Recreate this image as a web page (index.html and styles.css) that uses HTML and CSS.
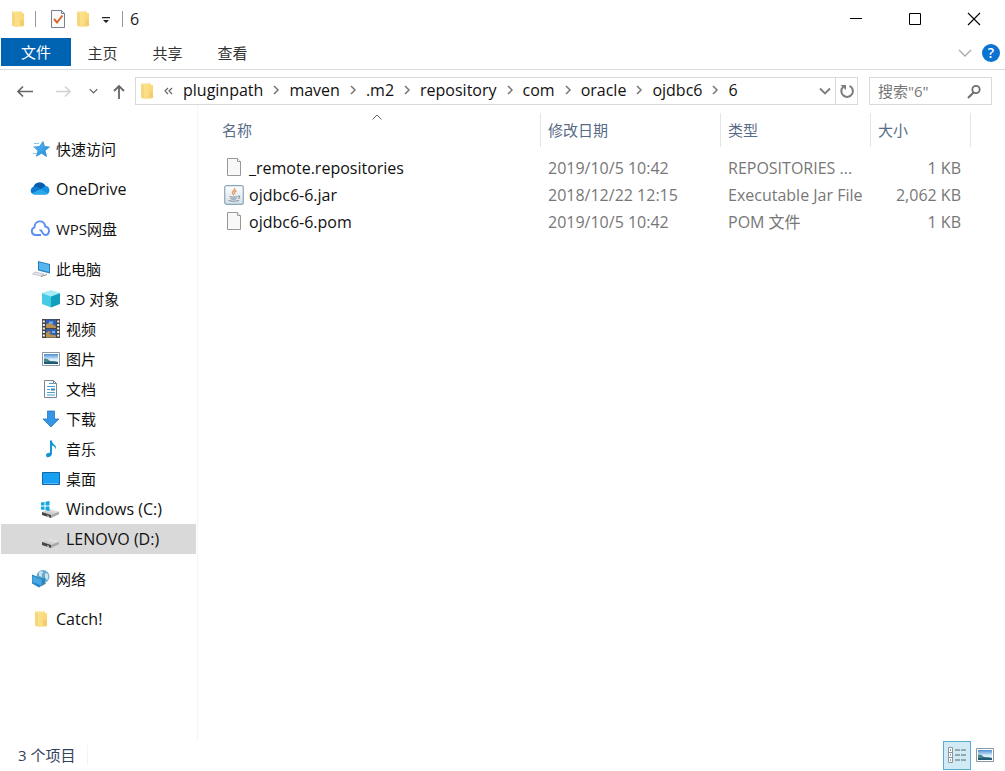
FILE: index.html
```html
<!DOCTYPE html>
<html lang="zh-CN">
<head>
<meta charset="utf-8">
<meta name="viewport" content="width=device-width, initial-scale=1">
<title>6</title>
<link rel="stylesheet" href="styles.css">
</head>
<body>
<svg class="defs" aria-hidden="true">
  <defs>
    <linearGradient id="fold" x1="0" x2="1"><stop offset="0" stop-color="#fde491"/><stop offset="1" stop-color="#f9d778"/></linearGradient>
    <linearGradient id="sky" x1="0" y1="0" x2="0" y2="1"><stop offset="0" stop-color="#4a8fd6"/><stop offset=".55" stop-color="#d9eefa"/><stop offset="1" stop-color="#e8f6f5"/></linearGradient>
    <linearGradient id="drive" x1="0" y1="1" x2="1" y2="0"><stop offset="0" stop-color="#b5b5b5"/><stop offset="1" stop-color="#f4f4f4"/></linearGradient>
    <linearGradient id="blue" x1="0" y1="0" x2="1" y2="1"><stop offset="0" stop-color="#5cb8f2"/><stop offset="1" stop-color="#1f8ddb"/></linearGradient>
    <linearGradient id="jar" x1="0" y1="0" x2="0" y2="1"><stop offset="0" stop-color="#ffffff"/><stop offset="1" stop-color="#d3dee6"/></linearGradient>
    <symbol id="i-folder" viewBox="0 0 14 18"><path fill="url(#fold)" d="M1 1.500h10v2l2-.5v13l-8 1-4-1.500z"/><path fill="#eec769" d="M1 1.500L4 4v12.800l-3-1.300z" opacity=".45"/><path fill="#eec35c" d="M9 10.500l2-1.500 2 1v6l-4 .5z" opacity=".5"/></symbol>
    <symbol id="i-right" viewBox="0 0 8 10"><path d="M2 1l4 4-4 4" fill="none" stroke="#777" stroke-width="1.5"/></symbol>
    <symbol id="i-down" viewBox="0 0 12 8"><path d="M1 1.5l5 5 5-5" fill="none" stroke="currentColor" stroke-width="1.8"/></symbol>
    <symbol id="i-pic" viewBox="0 0 18 14"><path fill="#fff" stroke="#8a97a5" d="M.5.5h17v13H.5z"/><path fill="url(#sky)" d="M2 2h14v10H2z"/><path fill="#47878c" d="M2 7c2-1 4 0 6 2l8 1v2H2z"/><path fill="#225b78" d="M2 10c4 0 7-1 14 0v2H2z"/></symbol>
    <symbol id="i-file" viewBox="0 0 20 20"><path d="M3.500 .5h10l3 3v14h-13z" fill="#f8f8f8" stroke="#999"/><path d="M13.500 .5v3h3" fill="#fff" stroke="#999"/></symbol>
    <symbol id="i-drive" viewBox="0 0 20 20"><path fill="url(#drive)" d="M2 13l8-3 9 2.500-8 3.500z"/><path fill="#454545" d="M2 13l9 3v3l-9-3z"/><path fill="#aaa" d="M11 16l8-3.500v2.700L11 19z"/><path fill="#d8eadf" d="M7 16.200l2 .7v1l-2-.7z"/></symbol>
  </defs>
</svg>

<header class="titlebar">
  <svg class="ic-folder"><use href="#i-folder"/></svg>
  <span class="bar"></span>
  <button class="bare" aria-label="属性"><svg width="16" height="20" viewBox="0 0 16 20"><path d="M1.500 1.500h10l3 3v14h-13z" fill="#fafafa" stroke="#77808c"/><path d="M11.500 1.500v3h3" fill="none" stroke="#77808c"/><path d="M4 10l3 3.500 5.500-7" fill="none" stroke="#d8662f" stroke-width="2"/></svg></button>
  <button class="bare new-folder" aria-label="新建文件夹"><svg class="ic-folder"><use href="#i-folder"/></svg></button>
  <button class="bare customize" aria-label="自定义快速访问工具栏"><svg width="8" height="10" viewBox="0 0 8 10"><path d="M0 3h8v1.300H0zM1 6h6L4 9z" fill="#222"/></svg></button>
  <span class="bar"></span>
  <h1 class="title">6</h1>
  <div class="window-buttons">
    <button class="bare" aria-label="最小化"><svg width="14" height="14" viewBox="0 0 14 14"><path d="M1 6.500h12" stroke="#000"/></svg></button>
    <button class="bare" aria-label="最大化"><svg width="14" height="14" viewBox="0 0 14 14"><path d="M1.500 1.500h11v11h-11z" fill="none" stroke="#000"/></svg></button>
    <button class="bare" aria-label="关闭"><svg width="14" height="14" viewBox="0 0 14 14"><path d="M1 1l12 12M13 1L1 13" stroke="#000" stroke-width="1.100"/></svg></button>
  </div>
</header>

<nav class="ribbon">
  <button class="tab active">文件</button>
  <button class="tab">主页</button>
  <button class="tab">共享</button>
  <button class="tab">查看</button>
  <div class="ribbon-end">
    <button class="bare expand" aria-label="展开功能区"><svg width="14" height="8" viewBox="0 0 14 8"><path d="M1 1l6 6 6-6" fill="none" stroke="#aaa" stroke-width="1.400"/></svg></button>
    <button class="help" aria-label="帮助">?</button>
  </div>
</nav>

<div class="toolbar">
  <div class="history">
    <button class="bare" aria-label="后退"><svg width="18" height="14" viewBox="0 0 18 14"><path d="M17 7.500H2M7 2.500l-5 5 5 5" fill="none" stroke="#666" stroke-width="1.700"/></svg></button>
    <button class="bare forward" aria-label="前进"><svg width="18" height="14" viewBox="0 0 18 14"><path d="M2 7.500h14M11 2.500l5 5-5 5" fill="none" stroke="#d2d2d2" stroke-width="1.500"/></svg></button>
    <button class="bare recent" aria-label="最近浏览的位置"><svg class="ic-small-down"><use href="#i-down"/></svg></button>
    <button class="bare up" aria-label="上移"><svg width="14" height="16" viewBox="0 0 14 16"><path d="M7 16V3M2 8l5-5 5 5" fill="none" stroke="#666" stroke-width="1.800"/></svg></button>
  </div>
  <div class="address">
    <svg class="ic-folder"><use href="#i-folder"/></svg>
    <button class="bare overflow" aria-label="更多"><svg width="9" height="8" viewBox="0 0 9 8"><path d="M4 1L1 4l3 3M8 1L5 4l3 3" fill="none" stroke="#666" stroke-width="1.200"/></svg></button>
    <div class="crumbs">
      <button class="crumb">pluginpath</button><svg class="sep"><use href="#i-right"/></svg>
      <button class="crumb">maven</button><svg class="sep"><use href="#i-right"/></svg>
      <button class="crumb">.m2</button><svg class="sep"><use href="#i-right"/></svg>
      <button class="crumb">repository</button><svg class="sep"><use href="#i-right"/></svg>
      <button class="crumb">com</button><svg class="sep"><use href="#i-right"/></svg>
      <button class="crumb">oracle</button><svg class="sep"><use href="#i-right"/></svg>
      <button class="crumb">ojdbc6</button><svg class="sep"><use href="#i-right"/></svg>
      <button class="crumb">6</button>
    </div>
    <button class="bare drop" aria-label="以前的位置"><svg class="ic-down"><use href="#i-down"/></svg></button>
    <button class="bare refresh" aria-label="刷新"><svg width="16" height="16" viewBox="0 0 16 16"><path d="M10.500 2.800A5.800 5.800 0 1 1 4 4" fill="none" stroke="#7c7c7c" stroke-width="2"/><path d="M1.500 2H7v5z" fill="#7c7c7c"/></svg></button>
  </div>
  <label class="search">
    <input type="text" placeholder="搜索&quot;6&quot;" aria-label="搜索">
    <svg width="16" height="16" viewBox="0 0 16 16"><circle cx="10" cy="6.500" r="3.700" fill="none" stroke="#707070" stroke-width="1.800"/><path d="M7.500 9.500L2 15" stroke="#707070" stroke-width="2.200"/></svg>
  </label>
</div>

<div class="body">
  <nav class="tree">
    <ul class="group"><li><button class="node"><svg viewBox="0 0 20 20"><path d="M13 2.500l1.500 5 5 .5-4.500 3.500 1.500 6-5-3.200-5 3 1.500-5.600-4-3.700 5.500-.5z" fill="url(#blue)" stroke="#2384c8" stroke-width=".7"/><path d="M4 4.500h5M3 14.500h4M3 8h3" stroke="#8bc6ea"/></svg>快速访问</button></li></ul>
    <ul class="group"><li><button class="node latin"><svg viewBox="0 0 20 20"><path d="M4 15.500a4 4 0 0 1-.5-7.500A6.500 6.500 0 0 1 15.500 7a4.300 4.300 0 0 1 .5 8.500z" fill="#1490df"/><path d="M3.500 8A6.500 6.500 0 0 1 15.500 7L10 10.500z" fill="#0a5cad"/><path d="M3.500 8c3-1.500 5 .5 7 1.800L2 14.500c-3-3 0-6.500 1.500-6.500z" fill="#0f78cf"/><path d="M10.500 10L18 14.500q-1 1-2 1H4q-1 0-2-1z" fill="#29a9ea"/></svg>OneDrive</button></li></ul>
    <ul class="group"><li><button class="node"><svg viewBox="0 0 20 20"><path d="M11 16H5a4 4 0 0 1-.5-7.700C4.500 1 14 .2 15.300 7.500 20.500 8.500 20 16 15 16c-3 0-2-5-5.500-5" fill="none" stroke="#5b8ff0" stroke-width="1.900"/></svg>WPS网盘</button></li></ul>
    <ul class="group">
      <li><button class="node"><svg viewBox="0 0 20 20"><path d="M8 2l12 3v9.500L8 11.500z" fill="#2a7fb8"/><path d="M9 3.300l10 2.500v7.200L9 10.600z" fill="#55b5f0"/><path d="M5 13l9 2-3 2-8.500-2z" fill="#e4e7ea" stroke="#aab" stroke-width=".6"/><path d="M11 17.500l6-2" stroke="#888"/></svg>此电脑</button></li>
      <li><button class="node child"><svg viewBox="0 0 20 20"><path d="M11 1l9 3-9 3.500L2 4z" fill="#a7edf6"/><path d="M2 4l9 3.500V18.500L2 15z" fill="#47cbe4"/><path d="M20 4l-9 3.500v11l9-3.500z" fill="#119fbe"/></svg>3D 对象</button></li>
      <li><button class="node child"><svg viewBox="0 0 20 20"><path d="M2 0h18v19H2z" fill="#454545"/><path d="M6 .5h10v8.500H6zM6 10h10v8.500H6z" fill="#315fb5"/><path d="M6 5.500l4-2 6 4V9H6zM6 14l3-2 2 1-2 2 7 1.500v2H6z" fill="#b8934f"/><path d="M9 2.500h4v2H9zM12 12h3v2h-3z" fill="#7ab0ec"/><path d="M3.800 1.500v17M18.200 1.500v17" stroke="#f5f5f5" stroke-width="2" stroke-dasharray="2 1.500"/></svg>视频</button></li>
      <li><button class="node child"><svg viewBox="-2 -3 20 20"><use href="#i-pic" width="18" height="14"/></svg>图片</button></li>
      <li><button class="node child"><svg viewBox="0 0 20 20"><path d="M4.500 1.500h9l3 3v14h-12z" fill="#fff" stroke="#7a8791"/><path d="M13.500 1.500v3h3" fill="none" stroke="#7a8791"/><path d="M9 4.500h4M7 7.500h8M7 10.500h3M7 13.500h8M7 16h8" stroke="#48a0d4" stroke-width="1.200"/><path d="M11 9.500h4v2h-4z" fill="#2c86bd"/></svg>文档</button></li>
      <li><button class="node child"><svg viewBox="0 0 20 20"><path d="M7.500 2h7v8H19l-8 8-8-8h4.500z" fill="#3595e6" stroke="#2878c0" stroke-width=".8"/></svg>下载</button></li>
      <li><button class="node child"><svg viewBox="0 0 20 20"><path d="M10 1.500h2c0 4 5 4 4 9-1-3-3-4-4-4v8c0 4-6 5-6 2 0-2 2-3 4-2.500z" fill="#1595d8"/></svg>音乐</button></li>
      <li><button class="node child"><svg viewBox="0 0 20 20"><path d="M2.500 3.500h17v12h-17z" fill="#19a0f3" stroke="#1466a8"/><path d="M4 14.500h14" stroke="#56bdf8"/></svg>桌面</button></li>
      <li><button class="node child latin"><svg viewBox="0 0 20 20"><use href="#i-drive"/><path d="M1 3.500l3.500-.5v3.500H1zM5.500 2.800L9.500 2v4.500h-4zM1 7.500h3.500V11L1 10.500zM5.500 7.500h4V12l-4-.8z" fill="#12a7dd"/></svg>Windows (C:)</button></li>
      <li><button class="node child latin selected" aria-current="true"><svg viewBox="0 0 20 20"><use href="#i-drive"/></svg>LENOVO (D:)</button></li>
    </ul>
    <ul class="group"><li><button class="node"><svg viewBox="0 0 20 20"><circle cx="13" cy="7.500" r="6.500" fill="#6aa9cb"/><path d="M9 3.500c2-2 4-1 4 0s-2 1-1 3-2 1-3 0zM15 4.500c3-1 4 2 3 5s-2 0-3-1z" fill="#c7e6ef"/><path d="M2 5.500l10 4 3-1v6L9 18.500l-7-4z" fill="#2686c6"/><path d="M2.500 7l9 3.500v6L2.500 13z" fill="#4aa6e0"/><path d="M12 16.500l4-2.500" stroke="#657b88"/></svg>网络</button></li></ul>
    <ul class="group"><li><button class="node latin"><svg viewBox="-4 -1 20 20"><use href="#i-folder" width="14" height="18"/></svg>Catch!</button></li></ul>
  </nav>
  <main class="files">
    <table class="list">
      <colgroup><col class="c-name"><col class="c-date"><col class="c-type"><col class="c-size"></colgroup>
      <thead><tr>
        <th class="name-head"><svg class="sort" viewBox="0 0 10 6"><path d="M.5 5.500L5 1l4.500 4.500" fill="none" stroke="#666"/></svg>名称</th><th>修改日期</th><th>类型</th><th>大小</th>
      </tr></thead>
      <tbody>
        <tr><td class="name"><svg><use href="#i-file"/></svg>_remote.repositories</td><td>2019/10/5 10:42</td><td>REPOSITORIES ...</td><td class="size">1 KB</td></tr>
        <tr><td class="name"><svg viewBox="0 0 20 20"><rect x=".7" y=".7" width="18.600" height="18.600" rx="2" fill="url(#jar)" stroke="#8ba7ba" stroke-width="1.200"/><path d="M10.500 3c1.500 2.500-3 3-2 5 .5 1 1.500 1.500 1 2.500M12.500 5.500c-2 1-2.500 2-1.500 3.200" fill="none" stroke="#e39a68" stroke-width="1.400"/><path d="M5.500 11.500q4 1.500 8 0M6.500 13.500q3 1.200 6 0M4.500 15.500q5 1.600 10.500 0M14 11c2.500-.3 2 2 0 2.500" fill="none" stroke="#8294a3" stroke-width="1.100"/></svg>ojdbc6-6.jar</td><td>2018/12/22 12:15</td><td>Executable Jar File</td><td class="size">2,062 KB</td></tr>
        <tr><td class="name"><svg><use href="#i-file"/></svg>ojdbc6-6.pom</td><td>2019/10/5 10:42</td><td>POM 文件</td><td class="size">1 KB</td></tr>
      </tbody>
    </table>
  </main>
</div>

<footer class="status">
  <span class="count">3 个项目</span>
  <div class="views">
    <button class="view on" aria-label="详细信息" aria-pressed="true"><svg width="20" height="16" viewBox="0 0 20 16"><path d="M1.500.500h4v15h-4zM1.500 5.500h4M1.500 10.500h4" fill="#fff" stroke="#8b969c"/><path d="M3 2.500h1v1H3zM3 7.500h1v1H3zM3 12.500h1v1H3z" fill="#333"/><path d="M8 3h5M14 3h5M8 8h5M14 8h5M8 13h5M14 13h5" stroke="#59656b"/></svg></button>
    <button class="view" aria-label="大图标"><svg width="18" height="14"><use href="#i-pic"/></svg></button>
  </div>
</footer>
</body>
</html>
```
FILE: styles.css
```css
* {
  box-sizing: border-box;
}

body {
  display: flex;
  flex-direction: column;
  min-height: 100vh;
  margin: 0;
  background: #fff;
  color: #1a1a1a;
  font: 15px/20px "Open Sans", "Noto Sans CJK SC", sans-serif;
}

button,
input {
  margin: 0;
  padding: 0;
  border: 0;
  background: none;
  color: inherit;
  font: inherit;
}

svg {
  display: block;
  flex: none;
}

.defs {
  position: absolute;
  width: 0;
  height: 0;
}

.bare {
  display: flex;
  align-items: center;
  justify-content: center;
}

.ic-folder {
  width: 14px;
  height: 18px;
}

.titlebar {
  display: flex;
  align-items: center;
  height: 38px;
  padding-left: 11px;
}

.bar {
  width: 1px;
  height: 16px;
  margin: 0 14px 0 10px;
  background: #999;
}

.new-folder {
  margin-left: 10px;
}

.customize {
  margin-left: 12px;
}

.customize + .bar {
  margin: 0 7px 0 12px;
}

.title {
  margin: 0;
  font-size: 16px;
  font-weight: 400;
}

.window-buttons {
  display: flex;
  margin-left: auto;
  padding-right: 2px;
}

.window-buttons .bare {
  width: 59px;
  height: 38px;
}

.ribbon {
  display: flex;
  height: 32px;
  padding-left: 1px;
  border-bottom: 1px solid #dadbdc;
}

.tab {
  width: 65px;
  height: 30px;
  padding-right: 2px;
  color: #333;
}

.tab.active {
  width: 70px;
  height: 28px;
  padding: 0;
  background: #0063b1;
  color: #fff;
}

.ribbon-end {
  display: flex;
  align-items: center;
  gap: 10px;
  height: 30px;
  margin-left: auto;
  padding-right: 5px;
}

.help {
  width: 18px;
  height: 18px;
  border-radius: 50%;
  background: #0b73d0;
  color: #fff;
  font-size: 14px;
  font-weight: 600;
  line-height: 18px;
}

.toolbar {
  display: flex;
  padding: 7px 13px 0 0;
}

.history {
  display: flex;
  align-items: center;
  width: 135px;
  padding-left: 16px;
}

.forward {
  margin-left: 20px;
}

.recent {
  margin-left: 17px;
}

.up {
  margin-left: 14px;
}

.ic-small-down {
  width: 9px;
  height: 6px;
  color: #666;
}

.address {
  display: flex;
  flex: 1;
  align-items: center;
  height: 28px;
  padding-left: 4px;
  border: 1px solid #d9d9d9;
}

.overflow {
  width: 29px;
  height: 26px;
}

.crumbs {
  display: flex;
  flex: 1;
  align-items: center;
  height: 24px;
  margin-bottom: 2px;
  color: #111;
  font-size: 16px;
}

.sep {
  width: 8px;
  height: 10px;
  margin: 0 9px;
}

.drop {
  width: 20px;
  height: 26px;
  color: #7c7c7c;
}

.ic-down {
  width: 12px;
  height: 8px;
}

.refresh {
  width: 22px;
  height: 26px;
  border-left: 1px solid #d9d9d9;
}

.search {
  display: flex;
  align-items: center;
  width: 123px;
  height: 28px;
  margin-left: 11px;
  padding: 0 9px 0 8px;
  border: 1px solid #d9d9d9;
}

.search input {
  flex: 1;
  min-width: 0;
  outline: 0;
}

.search input::placeholder {
  color: #777;
  opacity: 1;
}

.body {
  display: flex;
  flex: 1;
}

.tree {
  display: flex;
  flex-direction: column;
  gap: 10px;
  width: 198px;
  padding: 29px 1px 0 1px;
  border-right: 1px solid #f5f5f5;
}

.group {
  margin: 0;
  padding: 0;
  list-style: none;
}

.node {
  display: flex;
  align-items: center;
  gap: 6px;
  width: 195px;
  height: 30px;
  padding-left: 29px;
  color: #111;
  white-space: nowrap;
}

.node svg {
  width: 20px;
  height: 20px;
}

.node.child {
  padding-left: 39px;
}

.node.latin {
  font-size: 16px;
}

.node.selected {
  background: #d9d9d9;
}

.files {
  flex: 1;
  padding: 8px 0 0 16px;
}

.list {
  table-layout: fixed;
  width: 757px;
  border-collapse: separate;
  border-spacing: 0;
  color: #777;
}

.c-name {
  width: 327px;
}

.c-date {
  width: 180px;
}

.c-type {
  width: 150px;
}

.c-size {
  width: 100px;
}

.list th {
  position: relative;
  height: 34px;
  padding: 0 7px;
  border-right: 1px solid #e5e5e5;
  color: #586b87;
  font-weight: 400;
  text-align: left;
}

.list .name-head {
  padding-left: 8px;
}

.sort {
  position: absolute;
  top: 1px;
  left: calc(50% - 5px);
  width: 10px;
  height: 6px;
}

.list thead::after {
  display: block;
  height: 7px;
  content: "";
}

.list td {
  height: 27px;
  padding: 0 0 0 7px;
  font-size: 16px;
  white-space: nowrap;
}

.list .name {
  display: flex;
  align-items: center;
  gap: 5px;
  padding-left: 10px;
  color: #111;
}

.name svg {
  width: 20px;
  height: 20px;
}

.list .size {
  padding-right: 10px;
  text-align: right;
}

.status {
  display: flex;
  align-items: center;
  justify-content: space-between;
  height: 31px;
  padding: 0 7px 1px 18px;
  color: #33425c;
}

.count {
  padding-right: 12px;
  border-right: 1px solid #f3f3f3;
}

.views {
  display: flex;
}

.view {
  display: flex;
  align-items: center;
  justify-content: center;
  width: 27px;
  height: 29px;
}

.view.on {
  width: 28px;
  border: 1px solid #5aaccb;
  background: #d0ebf6;
}
```
